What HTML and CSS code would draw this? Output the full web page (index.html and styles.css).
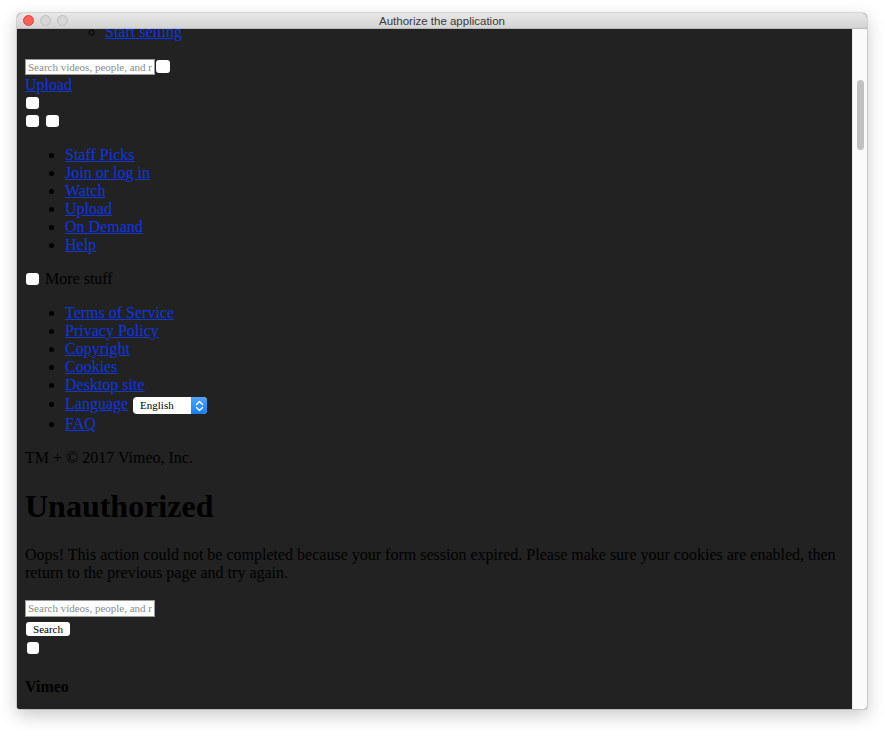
FILE: index.html
```html
<!DOCTYPE html>
<html>
<head>
<meta charset="utf-8">
<title>Authorize the application</title>
<link rel="stylesheet" href="styles.css">
</head>
<body>
<div class="window">
  <div class="titlebar">
    <div class="lights">
      <span class="light red"></span>
      <span class="light"></span>
      <span class="light"></span>
    </div>
    <div class="title">Authorize the application</div>
  </div>
  <div class="viewport">
    <div class="page">
      <div class="page-inner">
        <ul class="outer-list">
          <li class="plain">
            <ul class="sub-list">
              <li><a href="#">Start selling</a></li>
            </ul>
          </li>
        </ul>
        <div class="row search-row">
          <span class="input">Search videos, people, and r</span><span class="btn-sq"></span>
        </div>
        <div class="row link-row"><a href="#">Upload</a></div>
        <div class="row box-row"><span class="chk"></span></div>
        <div class="row box-row"><span class="chk"></span><span class="chk"></span></div>
        <ul class="list">
          <li><a href="#">Staff Picks</a></li>
          <li><a href="#">Join or log in</a></li>
          <li><a href="#">Watch</a></li>
          <li><a href="#">Upload</a></li>
          <li><a href="#">On Demand</a></li>
          <li><a href="#">Help</a></li>
        </ul>
        <div class="row more-row"><span class="chk"></span><span class="more">More stuff</span></div>
        <ul class="list">
          <li><a href="#">Terms of Service</a></li>
          <li><a href="#">Privacy Policy</a></li>
          <li><a href="#">Copyright</a></li>
          <li><a href="#">Cookies</a></li>
          <li><a href="#">Desktop site</a></li>
          <li class="lang"><a href="#">Language</a> <span class="select"><span class="select-text">English</span><span class="stepper"><svg width="9" height="12" viewBox="0 0 9 12"><path d="M1.5 4.5 L4.5 1.5 L7.5 4.5 M1.5 7.5 L4.5 10.5 L7.5 7.5" fill="none" stroke="#fff" stroke-width="1.4" stroke-linecap="round" stroke-linejoin="round"/></svg></span></span></li>
          <li><a href="#">FAQ</a></li>
        </ul>
        <p class="copy">TM + © 2017 Vimeo, Inc.</p>
        <h1>Unauthorized</h1>
        <p class="msg">Oops! This action could not be completed because your form session expired. Please make sure your cookies are enabled, then return to the previous page and try again.</p>
        <div class="row search-row2"><span class="input">Search videos, people, and r</span></div>
        <div class="row btn-row"><span class="button">Search</span></div>
        <div class="row box-row2"><span class="chk small"></span></div>
        <h4>Vimeo</h4>
      </div>
    </div>
    <div class="scrollbar"><div class="thumb"></div></div>
  </div>
</div>
</body>
</html>
```

FILE: styles.css
```css
html, body {
  margin: 0;
  padding: 0;
  background: #ffffff;
  width: 884px;
  height: 730px;
  overflow: hidden;
}
body {
  padding-top: 13px;
  padding-left: 17px;
  box-sizing: border-box;
}
.window {
  width: 850px;
  height: 696px;
  border-radius: 5px 5px 3px 3px;
  overflow: hidden;
  box-shadow: 0 6px 18px rgba(0,0,0,0.22), 0 0 0 1px rgba(0,0,0,0.12);
  display: flex;
  flex-direction: column;
  background: #222;
}
.titlebar {
  height: 16px;
  flex: none;
  background: linear-gradient(#e8e8e8, #d3d3d3);
  border-bottom: 1px solid #b9b9b9;
  display: flex;
  align-items: center;
  position: relative;
  box-sizing: border-box;
}
.lights {
  display: flex;
  gap: 6px;
  padding-left: 6px;
}
.light {
  width: 11px;
  height: 11px;
  border-radius: 50%;
  background: #d6d6d6;
  border: 0.5px solid #bdbdbd;
  box-sizing: border-box;
}
.light.red {
  background: #fc5f57;
  border-color: #e0443e;
}
.title {
  position: absolute;
  left: 0;
  right: 0;
  top: 0;
  text-align: center;
  font-family: "Liberation Sans", Arial, sans-serif;
  font-size: 11.5px;
  line-height: 16px;
  color: #3a3a3a;
}
.viewport {
  flex: 1;
  display: flex;
  overflow: hidden;
}
.page {
  flex: 1;
  background: #222222;
  overflow: hidden;
  font-family: "Liberation Serif", "Times New Roman", serif;
  font-size: 16px;
  line-height: 18px;
  color: #000;
}
.page-inner {
  padding: 0 8px;
  margin-top: -6px;
}
.scrollbar {
  width: 15px;
  flex: none;
  background: #fafafa;
  border-left: 1px solid #ececec;
  box-sizing: border-box;
  padding-top: 51px;
  display: flex;
  justify-content: center;
}
.thumb {
  width: 7px;
  height: 70px;
  border-radius: 4px;
  background: #c1c1c1;
}
a {
  color: #0f36e0;
  text-decoration: underline;
}
ul {
  margin: 0 0 16px 0;
  padding-left: 40px;
}
li { line-height: 18px; }
.outer-list { list-style: none; }
.sub-list {
  margin: 0;
  list-style: circle;
}
.row {
  display: flex;
  align-items: center;
}
.search-row {
  height: 19px;
  gap: 1px;
}
.input {
  width: 130px;
  height: 16px;
  box-sizing: border-box;
  background: #fff;
  border: 1px solid #9a9a9a;
  font-size: 11px;
  line-height: 14px;
  color: #8a8a8a;
  padding-left: 2px;
  overflow: hidden;
  white-space: nowrap;
}
.btn-sq {
  width: 14px;
  height: 13px;
  border-radius: 3px;
  background: #fff;
}
.link-row { height: 18px; }
.box-row {
  height: 18px;
  gap: 7px;
  padding-left: 1px;
}
.list { margin-top: 16px; }
.chk {
  width: 13px;
  height: 12px;
  border-radius: 3px;
  background: #fff;
  flex: none;
}
.chk.small {
  width: 12px;
  height: 12px;
}
.more-row {
  height: 18px;
  gap: 6px;
  padding-left: 1px;
  margin-bottom: 16px;
}
.lang {
  height: 21px;
  line-height: 20px;
}
.select {
  display: inline-flex;
  align-items: stretch;
  vertical-align: top;
  margin-top: 3px;
  margin-left: 1px;
  width: 74px;
  height: 17px;
  border-radius: 4px;
  background: #fff;
  overflow: hidden;
}
.select-text {
  flex: 1;
  font-size: 11px;
  line-height: 17px;
  padding-left: 7px;
  color: #000;
}
.stepper {
  width: 16px;
  background: linear-gradient(#4ea6ff, #1a7df2);
  display: flex;
  align-items: center;
  justify-content: center;
}
.copy {
  margin: 0;
  line-height: 18px;
}
h1 {
  font-size: 32px;
  line-height: 37px;
  margin: 21px 0 21px 0;
  font-weight: bold;
}
.msg {
  margin: 0 0 16px 0;
}
.search-row2 {
  height: 21px;
  align-items: flex-start;
  padding-top: 2px;
  box-sizing: border-box;
}
.search-row2 .input { height: 17px; line-height: 15px; }
.btn-row {
  height: 20px;
  align-items: flex-start;
  padding-top: 3px;
  padding-left: 1px;
  box-sizing: border-box;
}
.button {
  width: 44px;
  height: 14px;
  border-radius: 3px;
  background: #fff;
  font-size: 11px;
  line-height: 14px;
  text-align: center;
  color: #000;
}
.box-row2 {
  height: 18px;
  align-items: flex-start;
  padding-top: 3px;
  padding-left: 2px;
  box-sizing: border-box;
}
h4 {
  font-size: 16px;
  line-height: 18px;
  margin: 21px 0;
  font-weight: bold;
}
```
